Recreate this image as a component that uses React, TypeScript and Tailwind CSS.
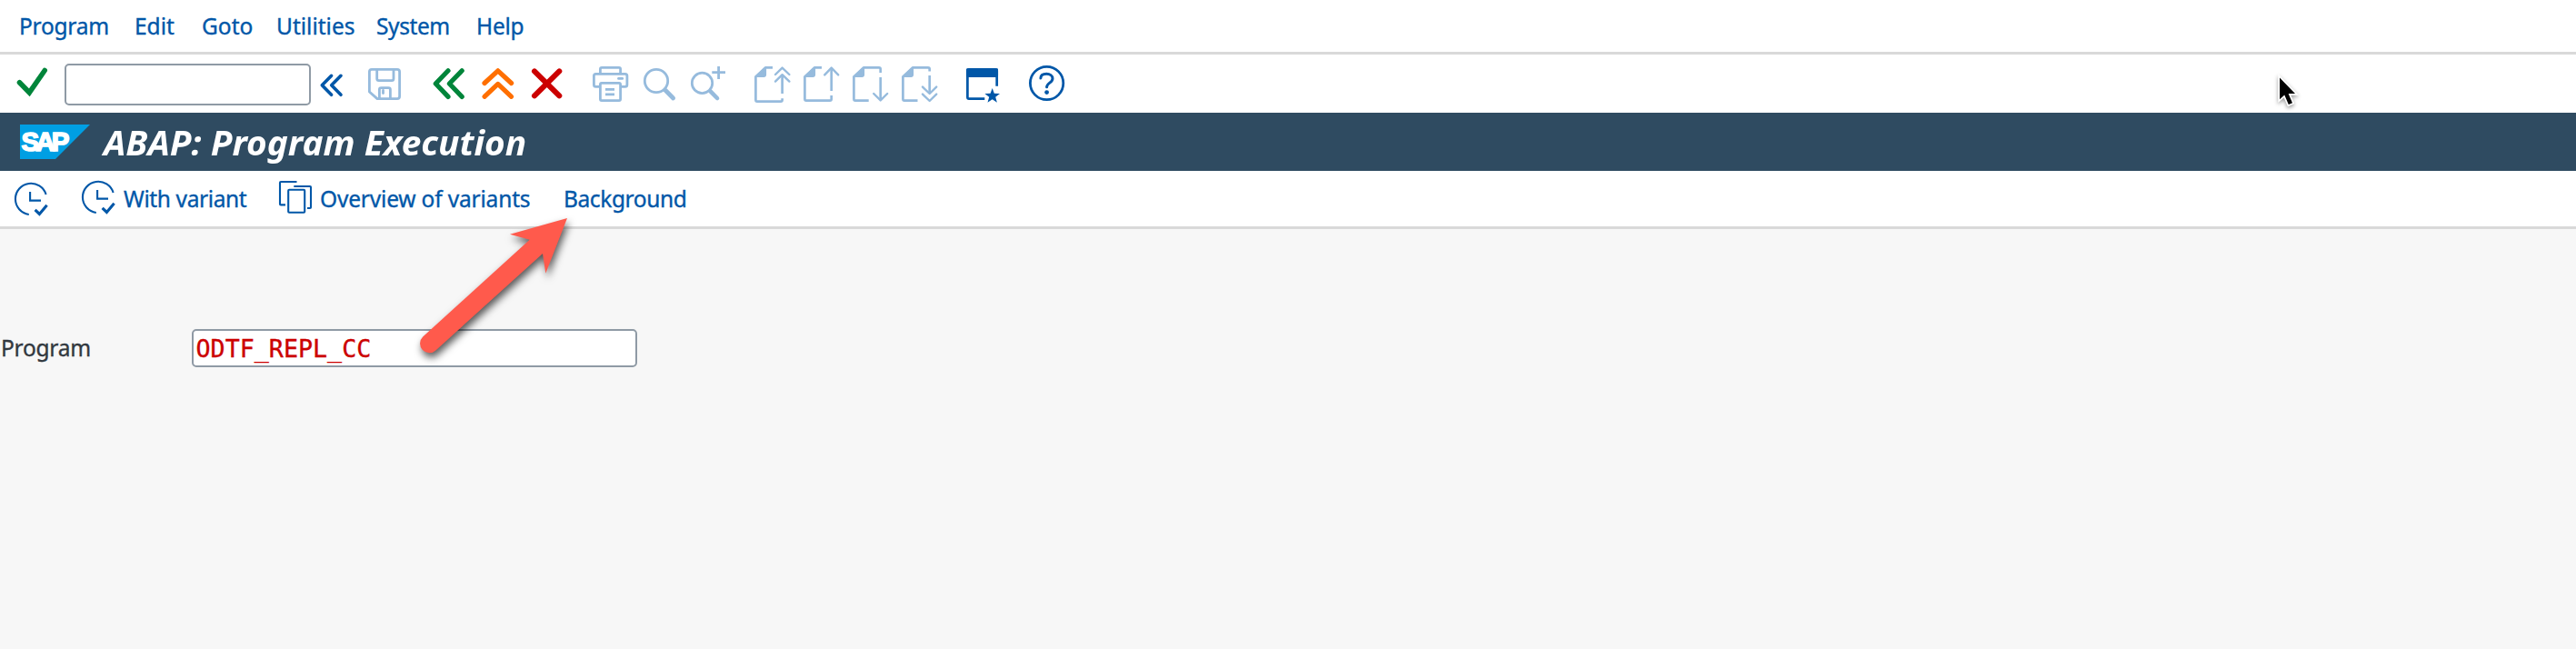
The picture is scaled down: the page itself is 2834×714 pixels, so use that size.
import type { ReactNode } from 'react';

type IconProps = { x: number; y?: number; w: number; h?: number; color: string; sw?: number; children: ReactNode };

// Each icon is a tile of its toolbar; drawing units are toolbar pixels.
function Icon({ x, y = 60, w, h = 64, color, sw = 2.8, children }: IconProps) {
  return (
    <svg
      className="block shrink-0"
      width={w}
      height={h}
      viewBox={`${x} ${y} ${w} ${h}`}
      fill="none"
      stroke={color}
      strokeWidth={sw}
      strokeLinecap="round"
      strokeLinejoin="round"
    >
      {children}
    </svg>
  );
}

const BLUE = '#0057a8';
const PALE = '#96bbdd';

function Toolbar() {
  return (
    <div className="flex h-16 items-start bg-white">
      <Icon x={0} w={71} color="#00853a" sw={5.6}>
        <path d="M21.5 90.8L32.3 101.8L49.2 77.5" strokeLinejoin="miter" />
      </Icon>
      <input className="mt-2.5 h-[46px] w-[271px] shrink-0 rounded-[5px] border-2 border-[#8f9aa5] bg-white px-2 outline-none" />
      <Icon x={342} w={48} color={BLUE} sw={3.6}>
        <path d="M364.6 83.3L354.3 93.8L364.6 104.3M375 83.3L364.7 93.8L375 104.3" />
      </Icon>
      <Icon x={390} w={70} color={PALE}>
        <path d="M409 76.4H437Q439.6 76.4 439.6 79V106Q439.6 108.6 437 108.6H415L406.4 101V79Q406.4 76.4 409 76.4Z" />
        <path d="M414.7 77V86.5Q414.7 88.6 416.8 88.6H431Q433 88.6 433 86.5V77" />
        <path d="M417.4 108V98.5Q417.4 96.6 419.4 96.6H427.4Q429.4 96.6 429.4 98.5V108" />
        <path d="M421.5 99.5V102.5" />
      </Icon>
      <Icon x={460} w={62} color="#00853a" sw={5.2}>
        <path d="M493 77.8L479.3 92L493 106.4M508.2 77.8L494.4 92L508.2 106.4" />
      </Icon>
      <Icon x={522} w={52} color="#ff6f00" sw={5.2}>
        <path d="M533 91.5L547.8 77.8L562.6 91.5M533 106.3L547.8 92.4L562.6 106.3" />
      </Icon>
      <Icon x={574} w={66} color="#cc0000" sw={6}>
        <path d="M588 78.4L615.3 105.4M615.3 78.4L588 105.4" />
      </Icon>
      <Icon x={640} w={58} color={PALE}>
        <path d="M660.4 80V76Q660.4 74.4 662 74.4H681Q682.6 74.4 682.6 76V80" />
        <path d="M659 95.4H655.5Q653.4 95.4 653.4 93.3V83.5Q653.4 81.4 655.5 81.4H687.8Q689.9 81.4 689.9 83.5V93.3Q689.9 95.4 687.8 95.4H684" />
        <rect x="660.4" y="91.4" width="22.2" height="19.2" rx="1.5" />
        <path d="M680.5 86.4H684.7" />
        <path d="M666 98.4H676M666 103.8H676" strokeLinecap="butt" />
      </Icon>
      <Icon x={698} w={52} color={PALE}>
        <circle cx="722" cy="89" r="12.7" />
        <path d="M732 99.2L740.6 108" strokeWidth="4.8" />
      </Icon>
      <Icon x={750} w={70} color={PALE}>
        <circle cx="772.5" cy="91.4" r="11.2" />
        <path d="M781.5 100.4L789 108" strokeWidth="4.6" />
        <path d="M790.6 73V87M783.3 79.6H798" strokeLinecap="butt" />
      </Icon>
      <Icon x={820} w={57} color={PALE} sw={2.7}>
        <path d="M850 74.4H842L831.4 84.5V110Q831.4 111.6 833 111.6H859Q860.6 111.6 860.6 110V108.3" strokeLinecap="butt" />
        <path d="M831.4 84.2L842.3 74.4V82Q842.3 84.2 840.2 84.2Z" fill={PALE} strokeWidth="1.6" />
        <path d="M860.6 82V103" strokeLinecap="butt" />
        <path d="M853 82L860.6 74.6L868.4 82M853 89.6L860.6 82.2L868.4 89.6" strokeWidth="2.4" />
      </Icon>
      <Icon x={877} w={54} color={PALE} sw={2.7}>
        <path d="M904 74.4H896L885.4 84.5V109Q885.4 110.6 887 110.6H913Q914.7 110.6 914.7 109V105" strokeLinecap="butt" />
        <path d="M885.4 84.2L896.3 74.4V82Q896.3 84.2 894.2 84.2Z" fill={PALE} strokeWidth="1.6" />
        <path d="M914.7 75V100" strokeLinecap="butt" />
        <path d="M907.2 82.4L914.7 74.6L922.2 82.4" strokeWidth="2.4" />
      </Icon>
      <Icon x={931} w={54} color={PALE} sw={2.7}>
        <path d="M955.7 110.6H941Q939.4 110.6 939.4 109V84.5L950 74.4H967Q968.7 74.4 968.7 76V80" strokeLinecap="butt" />
        <path d="M939.4 84.2L950.3 74.4V82Q950.3 84.2 948.2 84.2Z" fill={PALE} strokeWidth="1.6" />
        <path d="M968.7 85V110" strokeLinecap="butt" />
        <path d="M961.2 103L968.7 110.4L976.2 103" strokeWidth="2.4" />
      </Icon>
      <Icon x={985} w={65} color={PALE} sw={2.7}>
        <path d="M1009.5 110.6H995Q993.4 110.6 993.4 109V84.5L1004 74.4H1021Q1022.7 74.4 1022.7 76V78.5" strokeLinecap="butt" />
        <path d="M993.4 84.2L1004.3 74.4V82Q1004.3 84.2 1002.2 84.2Z" fill={PALE} strokeWidth="1.6" />
        <path d="M1022.7 83V102" strokeLinecap="butt" />
        <path d="M1015 95.6L1022.7 103L1030.2 95.6M1015 103.6L1022.7 111L1030.2 103.6" strokeWidth="2.4" />
      </Icon>
      <Icon x={1050} w={70} color={BLUE} sw={2.7}>
        <path d="M1083.3 108.7H1066Q1064.4 108.7 1064.4 107V78Q1064.4 76.4 1066 76.4H1095Q1096.7 76.4 1096.7 78V94.7" strokeLinecap="butt" />
        <path d="M1064.4 76.5H1096.7V83.6H1064.4Z" fill={BLUE} />
        <path
          d="M1091.7 97L1093.8 102.8L1100 103L1095.2 106.8L1096.9 112.7L1091.7 109.3L1086.5 112.7L1088.2 106.8L1083.4 103L1089.6 102.8Z"
          fill={BLUE}
          stroke="none"
        />
      </Icon>
      <Icon x={1120} w={64} color={BLUE} sw={2.8}>
        <circle cx="1151.6" cy="91.5" r="18.2" />
        <path d="M1144.9 86C1145 82.8 1147.8 81.3 1151.3 81.3C1155 81.3 1158 83.2 1158 86.4C1158 91 1151.6 91.2 1151.6 95.8" strokeWidth="3" />
        <circle cx="1151.6" cy="101.6" r="2.4" fill={BLUE} stroke="none" />
      </Icon>
    </div>
  );
}

function Clock({ x, y, w }: { x: number; y: number; w: number }) {
  return (
    <Icon x={x} y={y} w={w} h={61} color={BLUE} sw={2.1}>
      <path d="M50.6 214A17.2 17.2 0 1 0 31.8 236" strokeLinecap="butt" />
      <path d="M33.1 211V220.6H45" strokeLinecap="butt" strokeLinejoin="miter" />
      <path d="M38.6 230.8L43.4 235.4L51.6 225.8" strokeWidth="3.1" strokeLinecap="butt" strokeLinejoin="miter" />
    </Icon>
  );
}

export default function App() {
  return (
    <div className="relative flex h-[714px] w-[2834px] flex-col overflow-hidden bg-[#f7f7f7] font-['Noto_Sans','Open_Sans',sans-serif] text-[24.5px] font-normal whitespace-nowrap text-[#0057a8] [-webkit-text-stroke:0.35px]">
      <nav className="flex h-[60px] shrink-0 border-b-3 border-[#d9d9d9] bg-white pl-[21px] leading-[58px]">
        <span className="w-[127px] tracking-[-0.25px]">Program</span>
        <span className="w-[74px]">Edit</span>
        <span className="w-[82px]">Goto</span>
        <span className="w-[110px]">Utilities</span>
        <span className="w-[110px] tracking-[-0.4px]">System</span>
        <span className="tracking-[-0.25px]">Help</span>
      </nav>

      <Toolbar />

      <header className="flex h-16 shrink-0 items-start bg-[#2f4b61]">
        <svg className="block shrink-0" width="114" height="64" viewBox="0 124 114 64">
          <path d="M22 137H99L61 175H22Z" fill="#009fe3" />
          <text
            x="23.5"
            y="165.8"
            textLength="53"
            lengthAdjust="spacing"
            fill="#fff"
            stroke="#fff"
            strokeWidth="1.6"
            className="font-['Liberation_Sans',sans-serif] text-[29.5px] font-bold"
          >
            SAP
          </text>
        </svg>
        <h1 className="origin-left scale-x-[1.049] text-[37px] leading-[66px] font-bold text-white italic [-webkit-text-stroke:0px]">
          ABAP: Program Execution
        </h1>
      </header>

      <div className="flex h-16 shrink-0 border-b-3 border-[#d9d9d9] bg-white leading-[62px]">
        <Clock x={0} y={188} w={74} />
        <Clock x={0} y={190} w={62} />
        <span className="w-[164px] tracking-[-0.38px]">With variant</span>
        <Icon x={300} y={188} w={52} h={61} color={BLUE} sw={2.1}>
          <path d="M326.5 200H309Q308 200 308 201V224.6Q308 225.4 309 225.4H314" strokeLinecap="butt" />
          <path d="M323.3 205H341Q342 205 342 206V228Q342 229 341 229H338" strokeLinecap="butt" />
          <rect x="317.2" y="208.8" width="18" height="25" rx="1" />
        </Icon>
        <span className="w-[268px] tracking-[-0.18px]">Overview of variants</span>
        <span className="tracking-[-0.4px]">Background</span>
      </div>

      <main className="flex items-start pt-[110px]">
        <label className="w-[211px] pl-px leading-[42px] tracking-[-0.25px] text-[#32393f]">Program</label>
        <div className="h-[42px] w-[490px] rounded-[5px] border-2 border-[#8f9aa5] bg-white pl-[2.5px] font-['DejaVu_Sans_Mono',monospace] text-[26.7px] leading-[39px] font-normal text-[#cc0000]">
          ODTF_REPL_CC
        </div>
      </main>

      <svg className="pointer-events-none absolute top-[220px] left-[440px]" width="220" height="190" viewBox="440 220 220 190">
        <path
          d="M624 240L561 257.7L582.7 263.7L465.2 370.6A10.2 10.2 0 0 0 479.4 385.4L597 279L600.3 300.7Z"
          fill="#ff5a4c"
          style={{ filter: 'drop-shadow(2px 5px 4px rgba(0,0,0,0.65))' }}
        />
      </svg>

      <svg className="pointer-events-none absolute top-[80px] left-[2496px]" width="44" height="44" viewBox="2496 80 44 44">
        <path
          d="M2508 85.5V109.3L2513.3 104.6L2517.8 115L2522 113.2L2517.6 103H2525Z"
          fill="#000"
          stroke="#fff"
          strokeWidth="3.4"
          paintOrder="stroke"
          style={{ filter: 'drop-shadow(0px 2px 2px rgba(0,0,0,0.4))' }}
        />
      </svg>
    </div>
  );
}
